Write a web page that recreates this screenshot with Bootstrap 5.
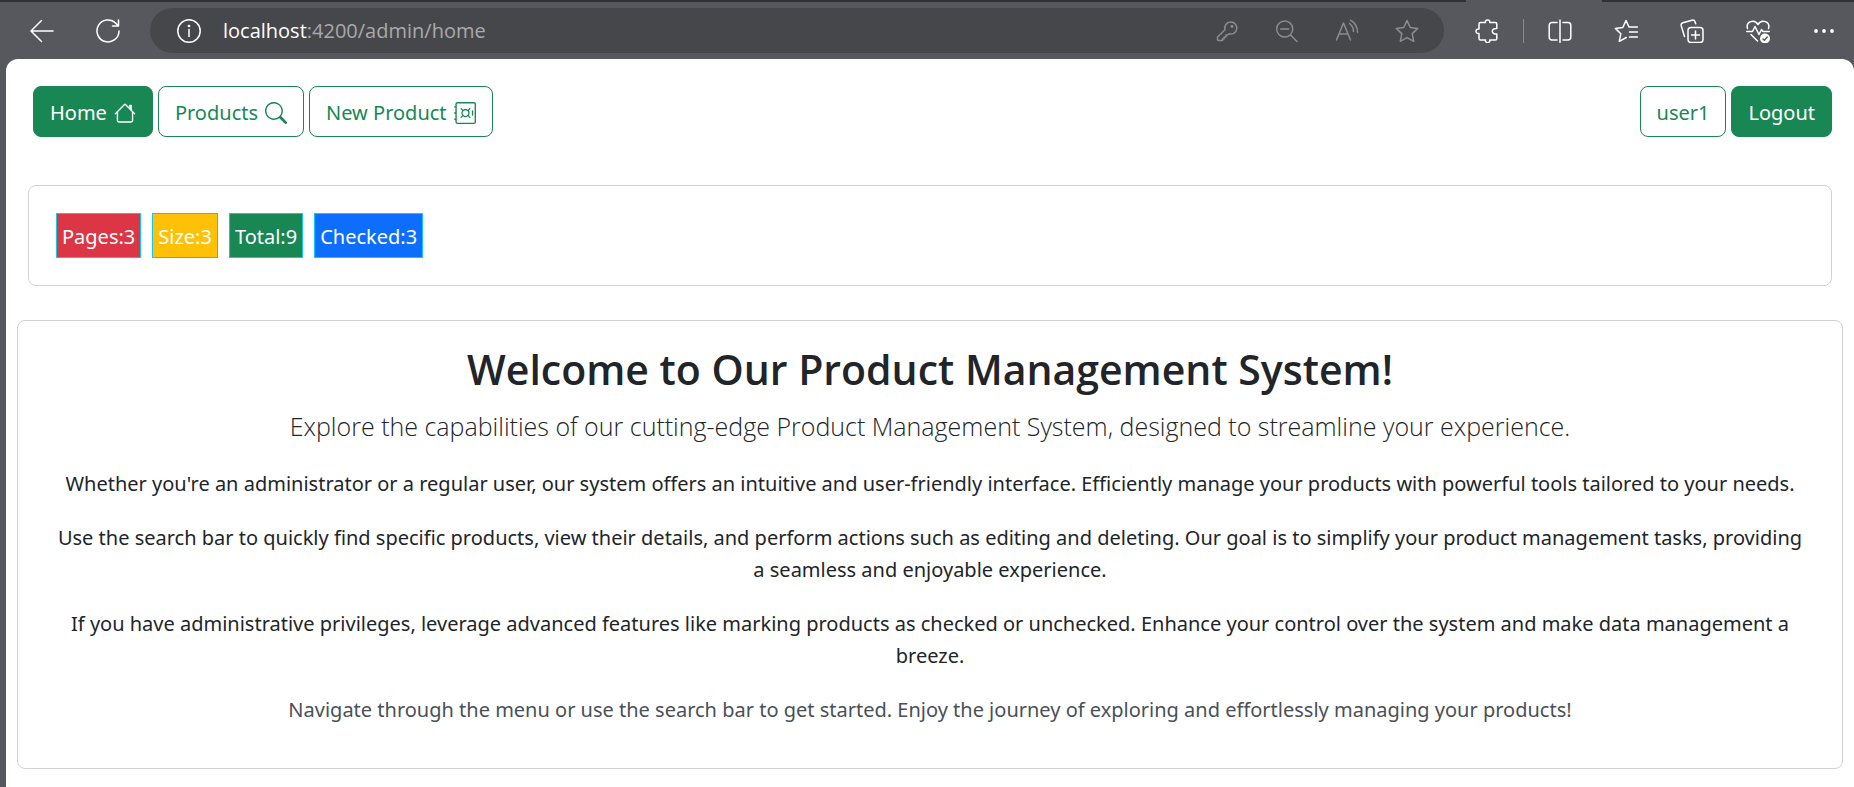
<!DOCTYPE html>
<html lang="en">
<head>
<meta charset="utf-8">
<meta name="viewport" content="width=device-width, initial-scale=1">
<title>Product Management System</title>
<link href="https://cdn.jsdelivr.net/npm/bootstrap@5.3.0/dist/css/bootstrap.min.css" rel="stylesheet">
<style>
  body {
    --chrome: #57585d;
    background: var(--chrome);
    font-family: "Noto Sans", "Open Sans", sans-serif;
    font-size: 20px;
    line-height: 32px;
  }
  svg { display: block; }
  /* Browser toolbar */
  .tab-strip { height: 2px; background: #303135; }
  .tab-active { width: 136px; margin-right: 252px; background: var(--chrome); }
  .toolbar { height: 57px; gap: 6px; padding: 0 0 0 12px; }
  .tool { width: 60px; height: 44px; padding: 0; border: 0; background: none; color: #fff; display: flex; align-items: center; justify-content: center; flex-shrink: 0; }
  .tool svg { width: 24px; height: 24px; fill: none; stroke: currentColor; stroke-width: 1.5; stroke-linecap: round; stroke-linejoin: round; }
  .address { height: 45px; margin: 0 7px 0 6px; padding: 0 7px 0 9px; background: #46474b; }
  .address-text { font-family: "Open Sans", "Noto Sans", sans-serif; color: #a9a9ac; padding-left: 4px; }
  .address .tool-dim { color: #8c8d90; }
  .tool-rule { width: 1px; height: 24px; background: #88898c; }
  /* Page */
  .viewport { margin-left: 6px; border-radius: 12px 12px 0 0; background: #fff; min-height: calc(100vh - 59px); padding: 27px 11px 18px; }
  .page-nav { padding: 0 11px 0 16px; gap: 5px; margin-bottom: 48px; }
  .page-btn { --bs-btn-font-size: 20px; --bs-btn-line-height: 32px; --bs-btn-padding-x: 16px; --bs-btn-border-radius: 8px; display: inline-flex; align-items: center; gap: 7px; height: 51px; padding-top: 9px; padding-bottom: 7px; }
  .page-btn svg { width: 22px; height: 22px; fill: currentColor; }
  .panel { border-radius: 8px; --bs-card-border-color: #d2d2d2; }
  .stats { margin: 0 11px 34px; padding: 27px; gap: 11px; }
  .stat { border: 1px solid #0dcaf0; padding: 7px 5px 4px; color: #fff; }
  .welcome { padding: 22px 34px 20px; text-align: center; }
  .welcome h1, .welcome .intro { font-family: "Open Sans", "Noto Sans", sans-serif; }
  .welcome h1 { font-size: 41px; line-height: 52px; font-weight: 600; margin: 0 0 11px; }
  .welcome p { margin-bottom: 22px; }
  .welcome .intro { font-size: 25px; line-height: 40px; font-weight: 300; }
  .closing { color: #495057; }
</style>
</head>
<body>
<header>
  <div class="tab-strip d-flex justify-content-end"><div class="tab-active"></div></div>
  <div class="toolbar d-flex align-items-center">
    <button class="tool" type="button" aria-label="Back"><svg viewBox="0 0 24 24"><path d="M23 12H1M11.500 1.500L1 12l10.500 10.500"/></svg></button>
    <button class="tool" type="button" aria-label="Reload"><svg viewBox="0 0 24 24"><path d="M23 12A11 11 0 1 1 19.800 4.200L22.500 7M22.500 1v6h-6"/></svg></button>
    <div class="address d-flex align-items-center flex-grow-1 rounded-pill">
      <button class="tool" type="button" aria-label="Site information"><svg viewBox="0 0 24 24"><circle cx="12" cy="12" r="11.200"/><path d="M12 10.500v7"/><circle cx="12" cy="7" r=".6" fill="currentColor"/></svg></button>
      <div class="address-text flex-grow-1" role="textbox" aria-label="Address"><span class="text-white">localhost</span>:4200/admin/home</div>
      <button class="tool tool-dim" type="button" aria-label="Passwords"><svg viewBox="0 0 24 24"><path d="M15.500 3a6 6 0 1 1-1.500 11.700L12.500 16H11v2H9v2H7.500v1.500H3.500a1 1 0 0 1-1-1V18l7.500-7.300A6 6 0 0 1 15.500 3z"/><circle cx="17" cy="7.500" r=".7" fill="currentColor"/></svg></button>
      <button class="tool tool-dim" type="button" aria-label="Zoom out"><svg viewBox="0 0 24 24"><circle cx="9.700" cy="10" r="8"/><path d="M15.500 16l6.500 6.500M5.700 10h8"/></svg></button>
      <button class="tool tool-dim" type="button" aria-label="Read aloud"><svg viewBox="0 0 24 24"><path d="M1.500 21L8.500 4l7 17M4 15h9M14.500 4.500a10 10 0 0 1 4 8M15.500 1.200a14 14 0 0 1 7 12"/></svg></button>
      <button class="tool tool-dim" type="button" aria-label="Add to favorites"><svg viewBox="0 0 24 24"><path d="M12 1.500l3.200 7 7.600.9-5.600 5.200 1.500 7.700-6.700-3.700-6.700 3.700 1.500-7.700L1.200 9.400l7.600-.9z"/></svg></button>
    </div>
    <button class="tool" type="button" aria-label="Extensions"><svg viewBox="0 0 24 24"><path d="M5.500 3.500h5c-.8-3.500 5-3.500 4.200 0h5.600a1.500 1.500 0 0 1 1.500 1.500v4.500c-6-.5-6 6 0 5.500v4.500a1.500 1.500 0 0 1-1.500 1.500h-5.600c.8 3.500-5 3.500-4.200 0h-5A1.500 1.500 0 0 1 4 19.500v-5c-4 .8-4-5.300 0-4.500V5a1.500 1.500 0 0 1 1.500-1.500z"/></svg></button>
    <div class="tool-rule"></div>
    <button class="tool" type="button" aria-label="Split screen"><svg viewBox="0 0 24 24"><path d="M9 3.500H4A2.800 2.800 0 0 0 1.200 6.300v12A2.800 2.800 0 0 0 4 21h5M15 3.500h5a2.800 2.800 0 0 1 2.800 2.800v12A2.800 2.800 0 0 1 20 21h-5M12 1v22.500"/></svg></button>
    <button class="tool" type="button" aria-label="Favorites"><svg viewBox="0 0 24 24"><path d="M15.500 8H23.500M15.500 13H23.500M15.500 18H23.500M15 8L12 1.500 8.800 8.500l-7.500.9L6.800 14.800l-1.500 7.500 7-3.800"/></svg></button>
    <button class="tool" type="button" aria-label="Collections"><svg viewBox="0 0 24 24"><rect x="8" y="8.500" width="15" height="15" rx="3"/><path d="M15.500 12v8M11.500 16h8M4.500 17.500L1.200 6.800a2.500 2.500 0 0 1 1.600-3L12 1.200a2.500 2.500 0 0 1 3 1.600l.7 2"/></svg></button>
    <button class="tool" type="button" aria-label="Browser essentials"><svg viewBox="0 0 24 24"><path d="M1.500 9.500C-.5 2.500 8.500-.5 12 5.500c3.500-6 12.500-3 10.500 4M.8 12.500h5.700l2.500-5 4 8 2.500-5 1.300 2h6.400M5 15.500l6.500 6.500"/><circle cx="19" cy="19.500" r="5" fill="currentColor" stroke="none"/><path d="M17 20l1.300 1.300 3-3.300" stroke="#57585d"/></svg></button>
    <button class="tool" type="button" aria-label="Settings and more"><svg viewBox="0 0 24 24"><g fill="currentColor" stroke="none"><circle cx="4" cy="12" r="1.900"/><circle cx="12" cy="12" r="1.900"/><circle cx="20" cy="12" r="1.900"/></g></svg></button>
  </div>
</header>

<div class="viewport">
  <nav class="page-nav d-flex align-items-center">
    <a class="btn btn-success page-btn" href="#home">Home
      <svg viewBox="0 0 16 16"><path fill-rule="evenodd" d="M2 13.500V7h1v6.500a.5.5 0 0 0 .5.5h9a.5.5 0 0 0 .5-.5V7h1v6.500a1.500 1.500 0 0 1-1.500 1.500h-9A1.500 1.500 0 0 1 2 13.500zm11-11V6l-2-2V2.500a.5.5 0 0 1 .5-.5h1a.5.5 0 0 1 .5.5z"/><path fill-rule="evenodd" d="M7.293 1.500a1 1 0 0 1 1.414 0l6.647 6.646a.5.5 0 0 1-.708.708L8 2.207 1.354 8.854a.5.5 0 1 1-.708-.708L7.293 1.500z"/></svg></a>
    <a class="btn btn-outline-success page-btn" href="#products">Products
      <svg viewBox="0 0 16 16"><path d="M11.742 10.344a6.500 6.500 0 1 0-1.397 1.398h-.001c.03.04.062.078.098.115l3.850 3.850a1 1 0 0 0 1.415-1.414l-3.850-3.850a1.007 1.007 0 0 0-.115-.1zM12 6.500a5.500 5.500 0 1 1-11 0 5.500 5.500 0 0 1 11 0z"/></svg></a>
    <a class="btn btn-outline-success page-btn me-auto" href="#new-product">New Product
      <svg viewBox="0 0 16 16"><path d="M1 1.500A1.500 1.500 0 0 1 2.500 0h12A1.500 1.500 0 0 1 16 1.500v13a1.500 1.500 0 0 1-1.500 1.500h-12A1.500 1.500 0 0 1 1 14.500V13H.5a.5.5 0 0 1 0-1H1V8.500H.5a.5.5 0 0 1 0-1H1V4H.5a.5.5 0 0 1 0-1H1V1.500zM2.500 1a.5.5 0 0 0-.5.5v13a.5.5 0 0 0 .5.5h12a.5.5 0 0 0 .5-.5v-13a.5.5 0 0 0-.5-.5h-12z"/><path d="M13.500 6a.5.5 0 0 1 .5.5v3a.5.5 0 0 1-1 0v-3a.5.5 0 0 1 .5-.5zM4.828 4.464a.5.5 0 0 1 .708 0l1.090 1.090a3.003 3.003 0 0 1 3.476 0l1.090-1.090a.5.5 0 1 1 .707.708l-1.090 1.090c.74 1.037.74 2.440 0 3.476l1.090 1.090a.5.5 0 1 1-.707.708l-1.090-1.090a3.002 3.002 0 0 1-3.476 0l-1.090 1.090a.5.5 0 1 1-.708-.708l1.090-1.090a3.003 3.003 0 0 1 0-3.476l-1.090-1.090a.5.5 0 0 1 0-.708zM6.950 6.586a2 2 0 1 0 2.828 2.828A2 2 0 0 0 6.950 6.586z"/></svg></a>
    <a class="btn btn-outline-success page-btn" href="#user">user1</a>
    <button class="btn btn-success page-btn" type="button">Logout</button>
  </nav>

  <section class="card panel stats flex-row">
    <span class="stat bg-danger">Pages:3</span>
    <span class="stat bg-warning">Size:3</span>
    <span class="stat bg-success">Total:9</span>
    <span class="stat bg-primary">Checked:3</span>
  </section>

  <main class="card panel welcome">
    <h1>Welcome to Our Product Management System!</h1>
    <p class="intro">Explore the capabilities of our cutting-edge Product Management System, designed to streamline your experience.</p>
    <p>Whether you're an administrator or a regular user, our system offers an intuitive and user-friendly interface. Efficiently manage your products with powerful tools tailored to your needs.</p>
    <p>Use the search bar to quickly find specific products, view their details, and perform actions such as editing and deleting. Our goal is to simplify your product management tasks, providing a seamless and enjoyable experience.</p>
    <p>If you have administrative privileges, leverage advanced features like marking products as checked or unchecked. Enhance your control over the system and make data management a breeze.</p>
    <p class="closing">Navigate through the menu or use the search bar to get started. Enjoy the journey of exploring and effortlessly managing your products!</p>
  </main>
</div>
<script src="https://cdn.jsdelivr.net/npm/bootstrap@5.3.0/dist/js/bootstrap.bundle.min.js"></script>
</body>
</html>
